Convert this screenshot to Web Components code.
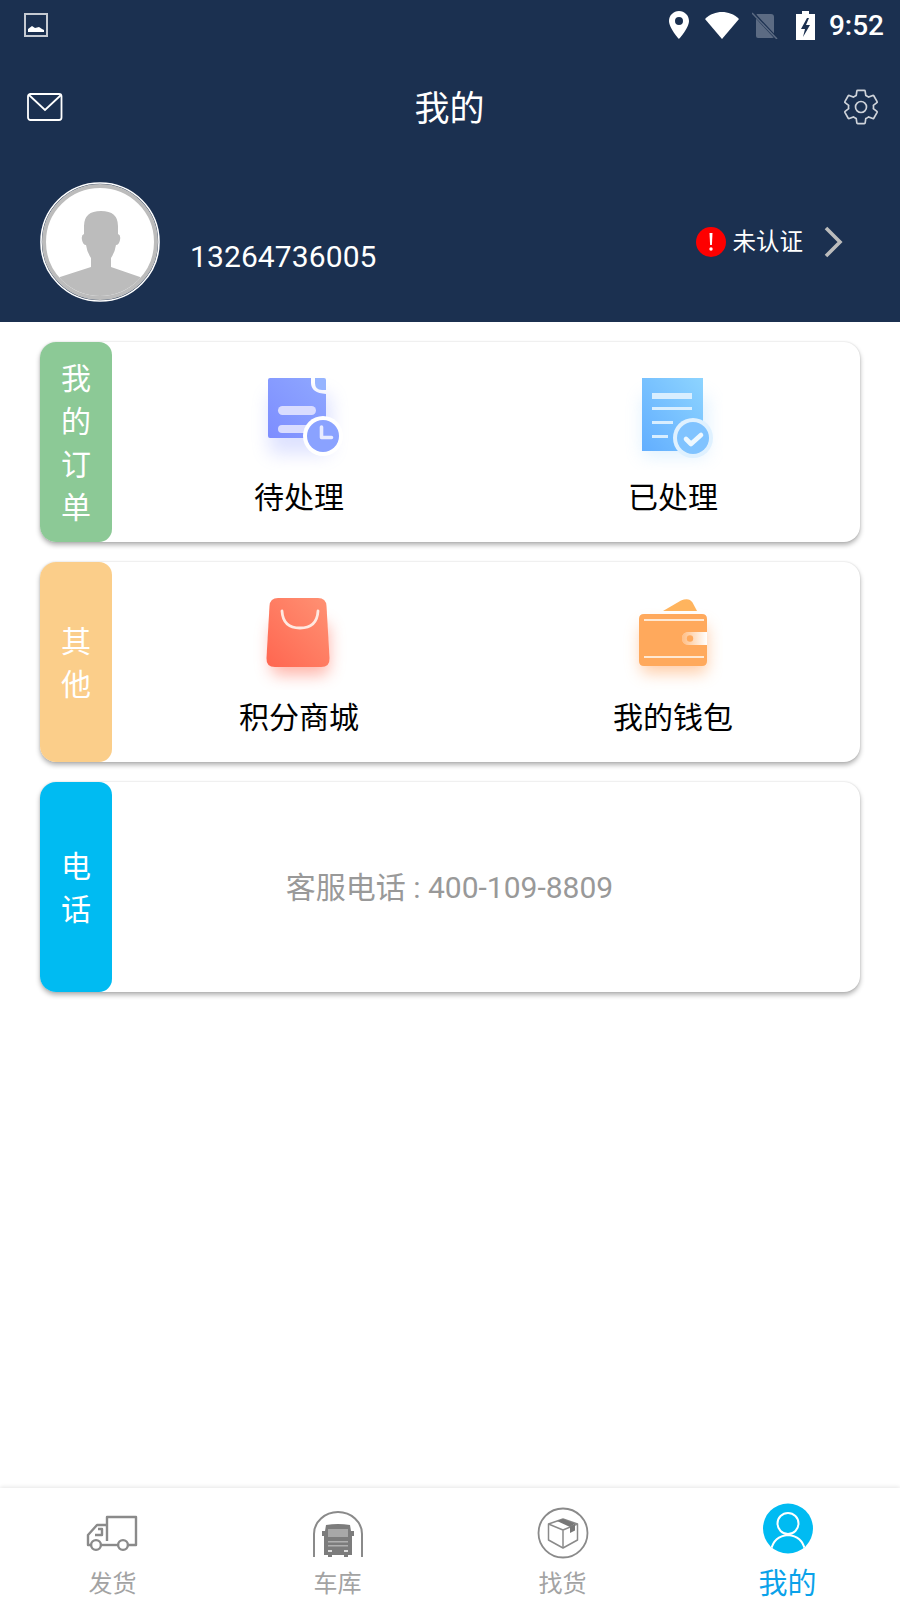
<!DOCTYPE html>
<html lang="zh">
<head>
<meta charset="utf-8">
<title>我的</title>
<style>
  html, body { margin: 0; padding: 0; background: #fff; }
  body {
    width: 900px;
    height: 1600px;
    overflow: hidden;
    display: flex;
    flex-direction: column;
    font-family: Roboto, "Noto Sans CJK SC", sans-serif;
  }
</style>
</head>
<body>
  <profile-header phone="13264736005"></profile-header>

  <card-list>
    <menu-card tab="我的订单" color="#8cc996">
      <menu-item>
        <svg slot="icon" width="100" height="100" viewBox="0 0 100 100">
          <defs>
            <linearGradient id="g1" x1="1" y1="0" x2="0" y2="1"><stop offset="0" stop-color="#8fa8ff"/><stop offset="1" stop-color="#7d8dff"/></linearGradient>
            <filter id="b1" x="-50%" y="-50%" width="200%" height="200%"><feGaussianBlur stdDeviation="9"/></filter>
          </defs>
          <rect x="20" y="24" width="62" height="60" rx="6" fill="#7d8dff" opacity=".25" filter="url(#b1)"/>
          <path d="M21 8h41v5q0 10 15 11v44h-56q-2 0-2-2V10q0-2 2-2z" fill="url(#g1)"/>
          <path d="M66 8h9q2 0 2 2v10h-4q-7 0-7-7z" fill="#96b4ff"/>
          <rect x="29" y="36" width="38" height="9" rx="4.500" fill="#d9dcff"/>
          <rect x="29" y="55" width="32" height="8" rx="4" fill="#d9dcff"/>
          <circle cx="74" cy="66" r="20" fill="#fff"/>
          <circle cx="74" cy="66" r="16" fill="#8aa2ff"/>
          <path d="M72.500 57v10.500h10" fill="none" stroke="#e8ebff" stroke-width="3.600" stroke-linecap="round" stroke-linejoin="round"/>
        </svg>
        待处理
      </menu-item>
      <menu-item>
        <svg slot="icon" width="100" height="100" viewBox="0 0 100 100">
          <defs>
            <linearGradient id="g2" x1="1" y1="0" x2="0" y2="1"><stop offset="0" stop-color="#8dd4ff"/><stop offset="1" stop-color="#62aeff"/></linearGradient>
            <filter id="b2" x="-50%" y="-50%" width="200%" height="200%"><feGaussianBlur stdDeviation="9"/></filter>
          </defs>
          <rect x="20" y="26" width="64" height="60" fill="#7cc4ff" opacity=".25" filter="url(#b2)"/>
          <rect x="19" y="8" width="61" height="73" fill="url(#g2)"/>
          <rect x="29" y="23" width="40" height="6" fill="#d8eeff"/>
          <rect x="29" y="37" width="40" height="3" fill="#d8eeff"/>
          <rect x="29" y="51" width="21" height="3" fill="#d8eeff"/>
          <rect x="29" y="65" width="16" height="3" fill="#d8eeff"/>
          <circle cx="70" cy="68" r="20" fill="#dff1ff"/>
          <circle cx="70" cy="68" r="16" fill="#80c3ff"/>
          <path d="M63 69l5 5 10-9" fill="none" stroke="#eef8ff" stroke-width="4.600" stroke-linecap="round" stroke-linejoin="round"/>
        </svg>
        已处理
      </menu-item>
    </menu-card>

    <menu-card tab="其他" color="#fbce8a">
      <menu-item>
        <svg slot="icon" width="100" height="100" viewBox="0 5 100 100">
          <defs>
            <linearGradient id="g3" x1="1" y1="0" x2="0" y2="1"><stop offset="0" stop-color="#ff9274"/><stop offset="1" stop-color="#ff6650"/></linearGradient>
            <filter id="b3" x="-50%" y="-50%" width="200%" height="200%"><feGaussianBlur stdDeviation="8"/></filter>
          </defs>
          <rect x="22" y="38" width="58" height="52" rx="8" fill="#ff6a55" opacity=".5" filter="url(#b3)"/>
          <path d="M29 13h40q8 0 8.500 8l3 52q.5 9-8.500 9H26q-9 0-8.500-9l3-52q.5-8 8.500-8z" fill="url(#g3)"/>
          <path d="M33 26q1 17 18 17t18-17" fill="none" stroke="#ffe9e1" stroke-width="2.800" stroke-linecap="round"/>
        </svg>
        积分商城
      </menu-item>
      <menu-item>
        <svg slot="icon" width="100" height="100" viewBox="0 5 100 100">
          <defs>
            <linearGradient id="g4" x1="0" y1="0" x2="1" y2="0"><stop offset="0" stop-color="#ffbe85"/><stop offset="1" stop-color="#fff"/></linearGradient>
            <filter id="b4" x="-50%" y="-50%" width="200%" height="200%"><feGaussianBlur stdDeviation="8"/></filter>
          </defs>
          <rect x="18" y="40" width="66" height="48" rx="6" fill="#ff9a50" opacity=".5" filter="url(#b4)"/>
          <path d="M40 26L58 15.500q8-3.500 11.500 2L74 26z" fill="#ffb45e"/>
          <path d="M21 29h58q5 0 5 5v13H66q-7 0-7 6.500T66 60h18v16q0 5-5 5H21q-5 0-5-5V34q0-5 5-5z" fill="#ffa95c"/>
          <path d="M66 47h18v13H66q-7 0-7-6.500T66 47z" fill="url(#g4)"/>
          <circle cx="67" cy="53.500" r="3.200" fill="#ffa95c"/>
          <rect x="21" y="34" width="60" height="2" fill="#ffe8d2"/>
          <rect x="21" y="71" width="60" height="2" fill="#ffe8d2"/>
        </svg>
        我的钱包
      </menu-item>
    </menu-card>

    <menu-card tab="电话" color="#00bbf2" tall>
      <phone-line>客服电话 : 400-109-8809</phone-line>
    </menu-card>
  </card-list>

  <tab-bar>
    <tab-item>
      <svg slot="icon" width="54" height="40" viewBox="1 0 54 40" style="margin-bottom:1px">
        <g fill="none" stroke="#8a8a8a" stroke-width="2.400" stroke-linejoin="round">
          <path d="M22 27V3h29v28h-8"/>
          <path d="M22 11H12L3 21v10h3"/>
          <path d="M16 31h17"/>
          <path d="M13 15h4v6h-7"/>
          <circle cx="11" cy="31" r="4.900"/>
          <circle cx="38" cy="31" r="4.900"/>
        </g>
      </svg>
      发货
    </tab-item>
    <tab-item>
      <svg slot="icon" width="54" height="50" viewBox="0 0 54 50" style="margin-bottom:-2px">
        <path d="M3 50V27a24 22 0 0 1 48 0v23" fill="none" stroke="#8a8a8a" stroke-width="2"/>
        <path d="M15 18q12-2 24 0l1 6h3v5h-2v19h-4v2h-4v-2H21v2h-4v-2h-4V29h-2v-5h3z" fill="#7c7c7c"/>
        <rect x="17" y="22" width="20" height="8" fill="#a8a8a8"/>
        <rect x="17" y="34" width="20" height="1.500" fill="#b0b0b0"/>
        <rect x="17" y="38" width="20" height="1.500" fill="#b0b0b0"/>
        <rect x="17" y="43" width="4" height="2" fill="#ddd"/>
        <rect x="33" y="43" width="4" height="2" fill="#ddd"/>
      </svg>
      车库
    </tab-item>
    <tab-item>
      <svg slot="icon" width="54" height="54" viewBox="0 0 54 54" style="margin-bottom:-5px">
        <circle cx="27" cy="27" r="24.500" fill="none" stroke="#8a8a8a" stroke-width="1.800"/>
        <g fill="none" stroke="#8a8a8a" stroke-width="1.500" stroke-linejoin="round">
          <path d="M27 13l14.500 5v16l-14.500 8-14.500-8V18z"/>
          <path d="M12.500 18l14.500 6 14.500-6M27 24v18"/>
        </g>
        <path d="M21 15l6-2 12 4.500-5 3.500z" fill="#777"/>
        <path d="M34 21l5-3.500v7l-5 2.500z" fill="#777"/>
      </svg>
      找货
    </tab-item>
    <tab-item active>
      <svg slot="icon" width="50" height="51" viewBox="0 0 50 51" style="margin-bottom:1px">
        <defs><clipPath id="me-clip"><circle cx="25" cy="25.500" r="25"/></clipPath></defs>
        <circle cx="25" cy="25.500" r="25" fill="#00bbf2"/>
        <circle cx="25" cy="20.500" r="10.500" fill="none" stroke="#fff" stroke-width="2"/>
        <path clip-path="url(#me-clip)" d="M8 47q3-14 17-15 14 1 17 15" fill="none" stroke="#fff" stroke-width="2"/>
      </svg>
      我的
    </tab-item>
  </tab-bar>

<script>
class ProfileHeader extends HTMLElement {

  constructor() {
    super();

    const template = document.createElement('template');
    template.innerHTML = `
      <style>
        :host {
          display: block;
          flex: none;
          background: #1b3050;
          color: #fff;
        }
        .status {
          height: 50px;
          display: flex;
          align-items: center;
          padding: 0 16px 0 24px;
        }
        .status .spacer { flex: 1; }
        .status .right { display: flex; align-items: center; }
        .time { font-size: 28px; font-weight: 500; margin-left: 14px; }
        .nav {
          height: 114px;
          display: flex;
          align-items: center;
          justify-content: space-between;
          padding: 0 19px 0 27px;
        }
        .nav h1 { margin: 0 5px 4px 0; font-size: 35px; font-weight: 400; }
        .user {
          height: 158px;
          box-sizing: border-box;
          padding: 18px 0 0 40px;
          display: flex;
          align-items: flex-start;
        }
        .phone { font-size: 30px; letter-spacing: .1px; margin: 57px 0 0 30px; line-height: 36px; flex: 1; }
        .verify {
          display: flex;
          align-items: center;
          margin: 43px 57px 0 0;
          font-size: 23.500px;
          line-height: 30px;
        }
        .alert {
          width: 30px;
          height: 30px;
          margin-right: 7px;
        }
        .chevron { margin-left: 20px; }
      </style>
      <div class="status">
        <svg width="24" height="26" viewBox="0 0 24 26">
          <rect x="1" y="2" width="22" height="22" fill="none" stroke="#c5cad2" stroke-width="2"/>
          <path d="M4 20v-3l4-3 3 2 4-1 3 2 2 1v2z" fill="#fff"/>
        </svg>
        <span class="spacer"></span>
        <div class="right">
          <svg width="20" height="28" viewBox="0 0 20 28" style="margin-right:16px">
            <path fill-rule="evenodd" d="M10 0C4.500 0 0 4.400 0 10c0 7 10 18 10 18s10-11 10-18C20 4.400 15.500 0 10 0zm0 14a4 4 0 1 1 0-8 4 4 0 0 1 0 8z" fill="#fff"/>
          </svg>
          <svg width="34" height="28" viewBox="0 0 34 28" style="margin-right:13px">
            <path d="M0 8C5 3 11 1 17 1s12 2 17 7L17 28z" fill="#fff"/>
          </svg>
          <svg width="26" height="28" viewBox="0 0 26 28" style="margin-right:18px">
            <path d="M5 3h14q3 0 3 3v20q0 1-2 1H6q-2 0-2-2V4z" fill="#5c6b83"/>
            <path d="M1 2l24 26" stroke="#1b3050" stroke-width="3"/>
            <path d="M0 2l25 26" stroke="#5c6b83" stroke-width="1.500"/>
          </svg>
          <svg width="19" height="29" viewBox="0 0 19 29">
            <path fill-rule="evenodd" d="M6 0h7v3h6v26H0V3h6zM11 7l-6 11h4l-2 8 7-12h-4l3-7z" fill="#fff"/>
          </svg>
          <span class="time">9:52</span>
        </div>
      </div>
      <div class="nav">
        <svg width="36" height="28" viewBox="0 0 36 28">
          <rect x="1" y="1" width="33.500" height="26" rx="2.500" fill="none" stroke="#fff" stroke-width="1.800"/>
          <path d="M2 2l16 15L34 2" fill="none" stroke="#fff" stroke-width="1.800"/>
        </svg>
        <h1>我的</h1>
        <svg width="40" height="40" viewBox="0 0 24 24">
          <path fill="none" stroke="#cfd3da" stroke-width="1" d="M19.430 12.980c.04-.32.07-.64.07-.98 0-.34-.03-.66-.07-.98l2.110-1.650c.19-.15.24-.42.12-.64l-2-3.460c-.09-.16-.26-.25-.44-.25-.06 0-.12.01-.17.03l-2.490 1c-.52-.4-1.080-.73-1.690-.98l-.38-2.650C14.460 2.180 14.250 2 14 2h-4c-.25 0-.46.18-.49.42l-.38 2.650c-.61.25-1.170.59-1.690.98l-2.490-1c-.06-.02-.12-.03-.18-.03-.17 0-.34.09-.43.25l-2 3.460c-.13.22-.07.49.12.64l2.110 1.650c-.04.32-.07.65-.07.98 0 .33.03.66.07.98l-2.110 1.650c-.19.15-.24.42-.12.64l2 3.460c.09.16.26.25.44.25.06 0 .12-.01.17-.03l2.490-1c.52.4 1.080.73 1.690.98l.38 2.650c.03.24.24.42.49.42h4c.25 0 .46-.18.49-.42l.38-2.650c.61-.25 1.170-.59 1.690-.98l2.490 1c.06.02.12.03.18.03.17 0 .34-.09.43-.25l2-3.460c.12-.22.07-.49-.12-.64l-2.110-1.650z"/>
          <circle cx="12" cy="12" r="3.300" fill="none" stroke="#cfd3da" stroke-width="1"/>
        </svg>
      </div>
      <div class="user">
        <svg width="120" height="120" viewBox="0 0 120 120" style="flex:none">
          <defs><clipPath id="avatar-clip"><circle cx="60" cy="60" r="54"/></clipPath></defs>
          <circle cx="60" cy="60" r="59" fill="#1b3050" stroke="#fff" stroke-width="1.600"/>
          <circle cx="60" cy="60" r="56" fill="#fff" stroke="#bcbcbc" stroke-width="4"/>
          <path clip-path="url(#avatar-clip)" d="M44 52V44Q44 29 61 29Q78 29 78 44V52Q81 53 80 58Q79 63 76 63Q75 70 71 76V85L100 95L120 120H0L20 95L51 85V76Q47 70 46 63Q43 63 42 58Q41 53 44 52Z" fill="#bcbcbc"/>
        </svg>
        <span class="phone"></span>
        <div class="verify">
          <svg class="alert" viewBox="0 0 30 30">
            <circle cx="15" cy="15" r="15" fill="#fe0000"/>
            <path d="M13.500 6h3l-.6 12h-1.800z" fill="#fff"/>
            <circle cx="15" cy="22" r="1.700" fill="#fff"/>
          </svg>
          <span>未认证</span>
          <svg class="chevron" width="20" height="34" viewBox="0 0 20 34">
            <path d="M3 3l14 14L3 31" fill="none" stroke="#bcbcbc" stroke-width="3.600"/>
          </svg>
        </div>
      </div>
    `;

    this.document = this.attachShadow({ mode: 'open' });
    this.document.appendChild(template.content.cloneNode(true));
  }

  connectedCallback() {
    this.document.querySelector('.phone').textContent = this.getAttribute('phone');
  }

}

class CardList extends HTMLElement {

  constructor() {
    super();

    const template = document.createElement('template');
    template.innerHTML = `
      <style>
        :host {
          display: flex;
          flex-direction: column;
          flex: 1;
          gap: 20px;
          padding: 20px 40px 0;
        }
      </style>
      <slot></slot>
    `;

    this.attachShadow({ mode: 'open' }).appendChild(template.content.cloneNode(true));
  }

}

class MenuCard extends HTMLElement {

  constructor() {
    super();

    const template = document.createElement('template');
    template.innerHTML = `
      <style>
        :host {
          display: flex;
          height: 200px;
          background: #fff;
          border-radius: 16px;
          box-shadow: 0 3px 5px rgba(0, 0, 0, .3), 0 0 2px rgba(0, 0, 0, .14);
        }
        :host([tall]) { height: 210px; }
        .tab {
          flex: none;
          box-sizing: border-box;
          width: 72px;
          padding-top: 2px;
          border-radius: 16px 13px 13px 16px;
          color: #fff;
          font-size: 30px;
          line-height: 43px;
          display: flex;
          flex-direction: column;
          align-items: center;
          justify-content: center;
        }
        .body {
          flex: 1;
          display: grid;
          grid-template-columns: 1fr 1fr;
        }
      </style>
      <div class="tab"></div>
      <div class="body"><slot></slot></div>
    `;

    this.document = this.attachShadow({ mode: 'open' });
    this.document.appendChild(template.content.cloneNode(true));
  }

  connectedCallback() {
    const tab = this.document.querySelector('.tab');
    tab.style.background = this.getAttribute('color');
    for (const char of this.getAttribute('tab')) {
      const line = document.createElement('span');
      line.textContent = char;
      tab.appendChild(line);
    }
  }

}

class MenuItem extends HTMLElement {

  constructor() {
    super();

    const template = document.createElement('template');
    template.innerHTML = `
      <style>
        :host {
          display: flex;
          flex-direction: column;
          align-items: center;
          padding-top: 28px;
          color: #000;
          font-size: 30px;
          line-height: 44px;
        }
        ::slotted(svg) { display: block; }
        .text { margin-top: 6px; }
      </style>
      <slot name="icon"></slot>
      <span class="text"><slot></slot></span>
    `;

    this.attachShadow({ mode: 'open' }).appendChild(template.content.cloneNode(true));
  }

}

class PhoneLine extends HTMLElement {

  constructor() {
    super();

    const template = document.createElement('template');
    template.innerHTML = `
      <style>
        :host {
          grid-column: 1 / -1;
          display: flex;
          align-items: center;
          justify-content: center;
          padding-right: 73px;
          padding-bottom: 4px;
          color: #999;
          font-size: 30px;
        }
      </style>
      <slot></slot>
    `;

    this.attachShadow({ mode: 'open' }).appendChild(template.content.cloneNode(true));
  }

}

class TabBar extends HTMLElement {

  constructor() {
    super();

    const template = document.createElement('template');
    template.innerHTML = `
      <style>
        :host {
          display: grid;
          grid-template-columns: repeat(4, 1fr);
          flex: none;
          height: 112px;
          background: #fff;
          box-shadow: 0 -1px 4px rgba(0, 0, 0, .1);
        }
      </style>
      <slot></slot>
    `;

    this.attachShadow({ mode: 'open' }).appendChild(template.content.cloneNode(true));
  }

}

class TabItem extends HTMLElement {

  constructor() {
    super();

    const template = document.createElement('template');
    template.innerHTML = `
      <style>
        :host {
          display: flex;
          flex-direction: column;
          align-items: center;
          box-sizing: border-box;
          height: 112px;
          padding-top: 27px;
          color: #a3a3a3;
          font-size: 24px;
          line-height: 30px;
        }
        :host([active]) {
          color: #0aa2ea;
          font-size: 29px;
        }
        .icon {
          height: 40px;
          display: flex;
          justify-content: center;
          align-items: flex-end;
        }
        ::slotted(svg) { display: block; flex: none; }
        .text { margin-top: 14px; white-space: nowrap; }
      </style>
      <div class="icon"><slot name="icon"></slot></div>
      <span class="text"><slot></slot></span>
    `;

    this.attachShadow({ mode: 'open' }).appendChild(template.content.cloneNode(true));
  }

}

window.customElements.define('profile-header', ProfileHeader);
window.customElements.define('card-list', CardList);
window.customElements.define('menu-card', MenuCard);
window.customElements.define('menu-item', MenuItem);
window.customElements.define('phone-line', PhoneLine);
window.customElements.define('tab-bar', TabBar);
window.customElements.define('tab-item', TabItem);
</script>
</body>
</html>
